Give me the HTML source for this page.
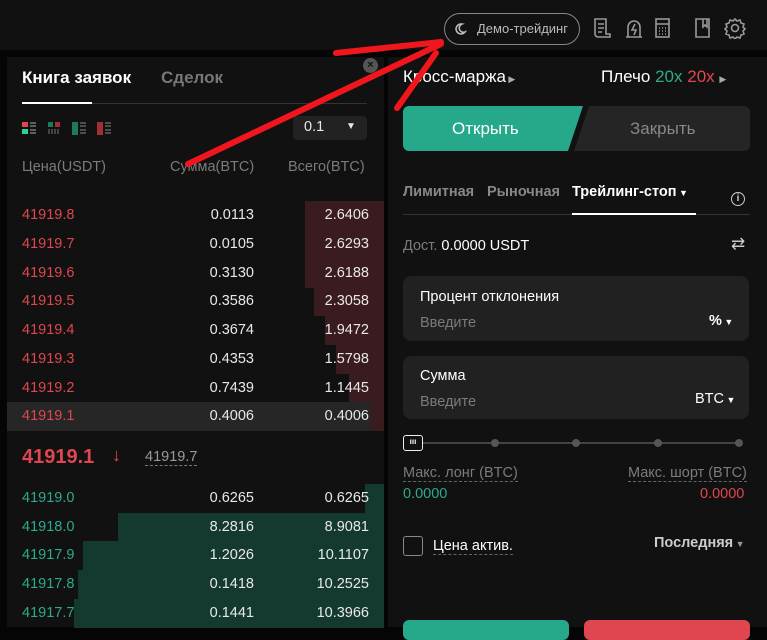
<!DOCTYPE html>
<html><head><meta charset="utf-8"><style>
*{margin:0;padding:0;box-sizing:border-box}
body{width:767px;height:627px;background:#050505;font-family:"Liberation Sans",sans-serif;position:relative;overflow:hidden;color:#e8e8e8}
.a{position:absolute;white-space:nowrap}
.top{position:absolute;left:0;top:0;width:767px;height:50px;background:#111}
.lp{position:absolute;left:7px;top:57px;width:377px;height:570px;background:#111}
.rp{position:absolute;left:388px;top:57px;width:379px;height:570px;background:#111}
.row{position:absolute;left:7px;width:377px;height:29px;font-size:14.5px}
.row span{position:absolute;top:6px}
.p{left:15px}.s{right:130px}.t{right:15px}
.bar{position:absolute;top:0;bottom:0;right:0}
.r{color:#e0464f}.g{color:#2bab8c}
.box{position:absolute;left:403px;width:346px;background:#212121;border-radius:8px}
.gray{color:#7b7b7b}
.f{font-size:14.5px}
</style></head><body>
<div class="top"></div>
<div class="a" style="left:444px;top:13px;width:136px;height:32px;border:1px solid #888;border-radius:16px;font-size:13px;color:#bbb;padding:7px 0 0 32px">Демо-трейдинг</div>
<svg class="a" style="left:453px;top:22px" width="14" height="14" viewBox="0 0 14 14"><path d="M9 2A5 5 0 1 0 12 10 4 4 0 0 1 9 2z" fill="none" stroke="#bbb" stroke-width="1.6"/></svg>
<svg class="a" style="left:593px;top:17px" width="155" height="22" viewBox="0 0 155 22" fill="none" stroke="#999" stroke-width="1.6">
<path d="M2 2h11v15h4v3H5a3 3 0 0 1-3-3z M5 7h6 M5 11h6 M5 15h4"/>
<path d="M33 20h16 M35 20V10a6 6 0 0 1 12 0v10 M42 7l-3 6h4l-2 5"/>
<rect x="63" y="2" width="13" height="18"/><path d="M63 7h13 M66 11h1 M69 11h1 M72 11h1 M66 14h1 M69 14h1 M72 14h1 M66 17h1 M69 17h1 M72 17h1"/>
<path d="M103 2h13v18h-13z M110 2v8l2-2 2 2V2"/>
<circle cx="142" cy="11" r="3.5"/><path d="M142 2l2 2 3-1 1 3 3 1-1 3 2 2-2 2 1 3-3 1-1 3-3-1-2 2-2-2-3 1-1-3-3-1 1-3-2-2 2-2-1-3 3-1 1-3 3 1z"/>
</svg>

<div class="lp"></div>
<div class="a" style="left:22px;top:68px;font-size:17px;font-weight:bold;color:#fff">Книга заявок</div>
<div class="a" style="left:161px;top:68px;font-size:17px;font-weight:bold;color:#777">Сделок</div>
<div class="a" style="left:22px;top:102px;width:70px;height:2px;background:#fff"></div>
<div class="a" style="left:92px;top:103px;width:275px;height:1px;background:#333"></div>
<div class="a" style="left:363px;top:58px;width:15px;height:15px;border-radius:50%;background:#555;color:#111;font-size:11px;text-align:center;line-height:15px;font-weight:bold">×</div>
<svg class="a" style="left:21px;top:121px" width="95" height="16">
<rect x="1" y="1" width="6" height="5" fill="#e0464f"/><rect x="1" y="8" width="6" height="5" fill="#2bd19b"/><path d="M9 2h6M9 5h6M9 9h6M9 12h6" stroke="#aaa"/>
<rect x="27" y="1" width="5" height="5" fill="#1f7a5a"/><rect x="34" y="1" width="5" height="5" fill="#a03035"/><path d="M28 8v5M31 8v5M34 8v5M37 8v5" stroke="#777"/>
<rect x="51" y="1" width="6" height="13" fill="#1f7a5a"/><path d="M59 2h6M59 5h6M59 9h6M59 12h6" stroke="#888"/>
<rect x="76" y="1" width="6" height="13" fill="#a03035"/><path d="M84 2h6M84 5h6M84 9h6M84 12h6" stroke="#888"/>
</svg>
<div class="a f" style="left:293px;top:116px;width:74px;height:24px;background:#222;border-radius:4px;padding:3px 0 0 11px">0.1 <span style="position:absolute;left:53px;top:5px;font-size:10px">▼</span></div>
<div class="a gray f" style="left:22px;top:159px">Цена(USDT)</div>
<div class="a gray f" style="left:170px;top:159px">Сумма(BTC)</div>
<div class="a gray f" style="left:288px;top:159px">Всего(BTC)</div>

<div class="row" style="top:201px"><div class="bar" style="left:298px;background:#3a1b1f"></div><span class="p r">41919.8</span><span class="s">0.0113</span><span class="t">2.6406</span></div>
<div class="row" style="top:230px"><div class="bar" style="left:298px;background:#3a1b1f"></div><span class="p r">41919.7</span><span class="s">0.0105</span><span class="t">2.6293</span></div>
<div class="row" style="top:259px"><div class="bar" style="left:298px;background:#3a1b1f"></div><span class="p r">41919.6</span><span class="s">0.3130</span><span class="t">2.6188</span></div>
<div class="row" style="top:287px"><div class="bar" style="left:307px;background:#3a1b1f"></div><span class="p r">41919.5</span><span class="s">0.3586</span><span class="t">2.3058</span></div>
<div class="row" style="top:316px"><div class="bar" style="left:318px;background:#3a1b1f"></div><span class="p r">41919.4</span><span class="s">0.3674</span><span class="t">1.9472</span></div>
<div class="row" style="top:345px"><div class="bar" style="left:329px;background:#3a1b1f"></div><span class="p r">41919.3</span><span class="s">0.4353</span><span class="t">1.5798</span></div>
<div class="row" style="top:374px"><div class="bar" style="left:342px;background:#3a1b1f"></div><span class="p r">41919.2</span><span class="s">0.7439</span><span class="t">1.1445</span></div>
<div class="row" style="top:402px;background:#262626"><div class="bar" style="left:364px;background:#3a1b1f"></div><span class="p r">41919.1</span><span class="s">0.4006</span><span class="t">0.4006</span></div>

<div class="a r" style="left:22px;top:446px;font-size:20px;font-weight:bold">41919.1</div>
<div class="a r" style="left:112px;top:445px;font-size:18px">↓</div>
<div class="a f" style="left:145px;top:449px;color:#999;border-bottom:1px dashed #777">41919.7</div>

<div class="row" style="top:484px"><div class="bar" style="left:358px;background:#143a30"></div><span class="p g">41919.0</span><span class="s">0.6265</span><span class="t">0.6265</span></div>
<div class="row" style="top:513px"><div class="bar" style="left:111px;background:#143a30"></div><span class="p g">41918.0</span><span class="s">8.2816</span><span class="t">8.9081</span></div>
<div class="row" style="top:541px"><div class="bar" style="left:76px;background:#143a30"></div><span class="p g">41917.9</span><span class="s">1.2026</span><span class="t">10.1107</span></div>
<div class="row" style="top:570px"><div class="bar" style="left:71px;background:#143a30"></div><span class="p g">41917.8</span><span class="s">0.1418</span><span class="t">10.2525</span></div>
<div class="row" style="top:599px"><div class="bar" style="left:67px;background:#143a30"></div><span class="p g">41917.7</span><span class="s">0.1441</span><span class="t">10.3966</span></div>

<div class="rp"></div>
<div class="a" style="left:403px;top:67px;font-size:17px;color:#fff">Кросс-маржа<span style="font-size:9px;color:#aaa"> ▶</span></div>
<div class="a" style="left:601px;top:67px;font-size:17px;color:#fff">Плечо <span class="g">20x</span> <span class="r">20x</span> <span style="font-size:9px;color:#aaa">▶</span></div>
<svg class="a" style="left:403px;top:106px" width="347" height="45"><path d="M6 0H180L165 45H6a6 6 0 0 1-6-6V6a6 6 0 0 1 6-6z" fill="#26a98b"/><path d="M186 0H341a6 6 0 0 1 6 6v33a6 6 0 0 1-6 6H171z" fill="#252525"/></svg>
<div class="a" style="left:452px;top:119px;font-size:17px;color:#fff">Открыть</div>
<div class="a" style="left:630px;top:119px;font-size:17px;color:#888">Закрыть</div>

<div class="a f" style="left:403px;top:184px;font-weight:bold;color:#888">Лимитная</div>
<div class="a f" style="left:487px;top:184px;font-weight:bold;color:#888">Рыночная</div>
<div class="a f" style="left:572px;top:184px;font-weight:bold;color:#fff">Трейлинг-стоп<span style="font-size:9px"> ▼</span></div>
<div class="a" style="left:403px;top:214px;width:347px;height:1px;background:#333"></div>
<div class="a" style="left:572px;top:213px;width:124px;height:2px;background:#fff"></div>
<div class="a" style="left:731px;top:192px;width:14px;height:14px;border:1.3px solid #ccc;border-radius:50%;font-size:10px;text-align:center;line-height:12px;color:#ccc;font-weight:bold">i</div>
<div class="a f" style="left:403px;top:238px"><span class="gray">Дост.</span> <span style="color:#fff">0.0000 USDT</span></div>
<div class="a" style="left:731px;top:234px;font-size:17px;color:#ccc">⇄</div>

<div class="box" style="top:276px;height:65px"></div>
<div class="a f" style="left:420px;top:289px;color:#fff">Процент отклонения</div>
<div class="a gray f" style="left:420px;top:315px">Введите</div>
<div class="a f" style="left:709px;top:313px;font-weight:bold;color:#fff">%<span style="font-size:9px"> ▼</span></div>
<div class="box" style="top:356px;height:63px"></div>
<div class="a f" style="left:420px;top:368px;color:#fff">Сумма</div>
<div class="a gray f" style="left:420px;top:394px">Введите</div>
<div class="a f" style="left:695px;top:391px;color:#fff">BTC<span style="font-size:9px"> ▼</span></div>

<div class="a" style="left:420px;top:442px;width:320px;height:2px;background:#444"></div>
<div class="a" style="left:403px;top:435px;width:20px;height:16px;border:1.5px solid #eee;border-radius:3px;background:#111;font-size:8px;text-align:center;line-height:12px;color:#fff;font-weight:bold">ııı</div>
<div class="a" style="left:491px;top:439px;width:8px;height:8px;border-radius:50%;background:#555"></div>
<div class="a" style="left:572px;top:439px;width:8px;height:8px;border-radius:50%;background:#555"></div>
<div class="a" style="left:654px;top:439px;width:8px;height:8px;border-radius:50%;background:#555"></div>
<div class="a" style="left:735px;top:439px;width:8px;height:8px;border-radius:50%;background:#555"></div>

<div class="a gray f" style="left:403px;top:465px;border-bottom:1px dashed #666">Макс. лонг (BTC)</div>
<div class="a g f" style="left:403px;top:486px">0.0000</div>
<div class="a gray f" style="left:628px;top:465px;border-bottom:1px dashed #666">Макс. шорт (BTC)</div>
<div class="a r f" style="left:700px;top:486px">0.0000</div>

<div class="a" style="left:403px;top:536px;width:20px;height:20px;border:1.5px solid #888;border-radius:3px"></div>
<div class="a f" style="left:433px;top:538px;color:#fff;border-bottom:1px dashed #666">Цена актив.</div>
<div class="a f" style="left:654px;top:535px;font-weight:bold;color:#ccc">Последняя<span style="font-size:9px;color:#999"> ▼</span></div>

<div class="a" style="left:403px;top:620px;width:166px;height:20px;border-radius:6px;background:#26a98b"></div>
<div class="a" style="left:584px;top:620px;width:166px;height:20px;border-radius:6px;background:#e0464f"></div>

<svg class="a" style="left:0;top:0" width="767" height="627"><g stroke="#f0161e" stroke-width="6" stroke-linecap="round" fill="none"><path d="M188 164L441 44"/><path d="M441 42L336 53"/><path d="M436 53L397 108"/></g></svg>
</body></html>
